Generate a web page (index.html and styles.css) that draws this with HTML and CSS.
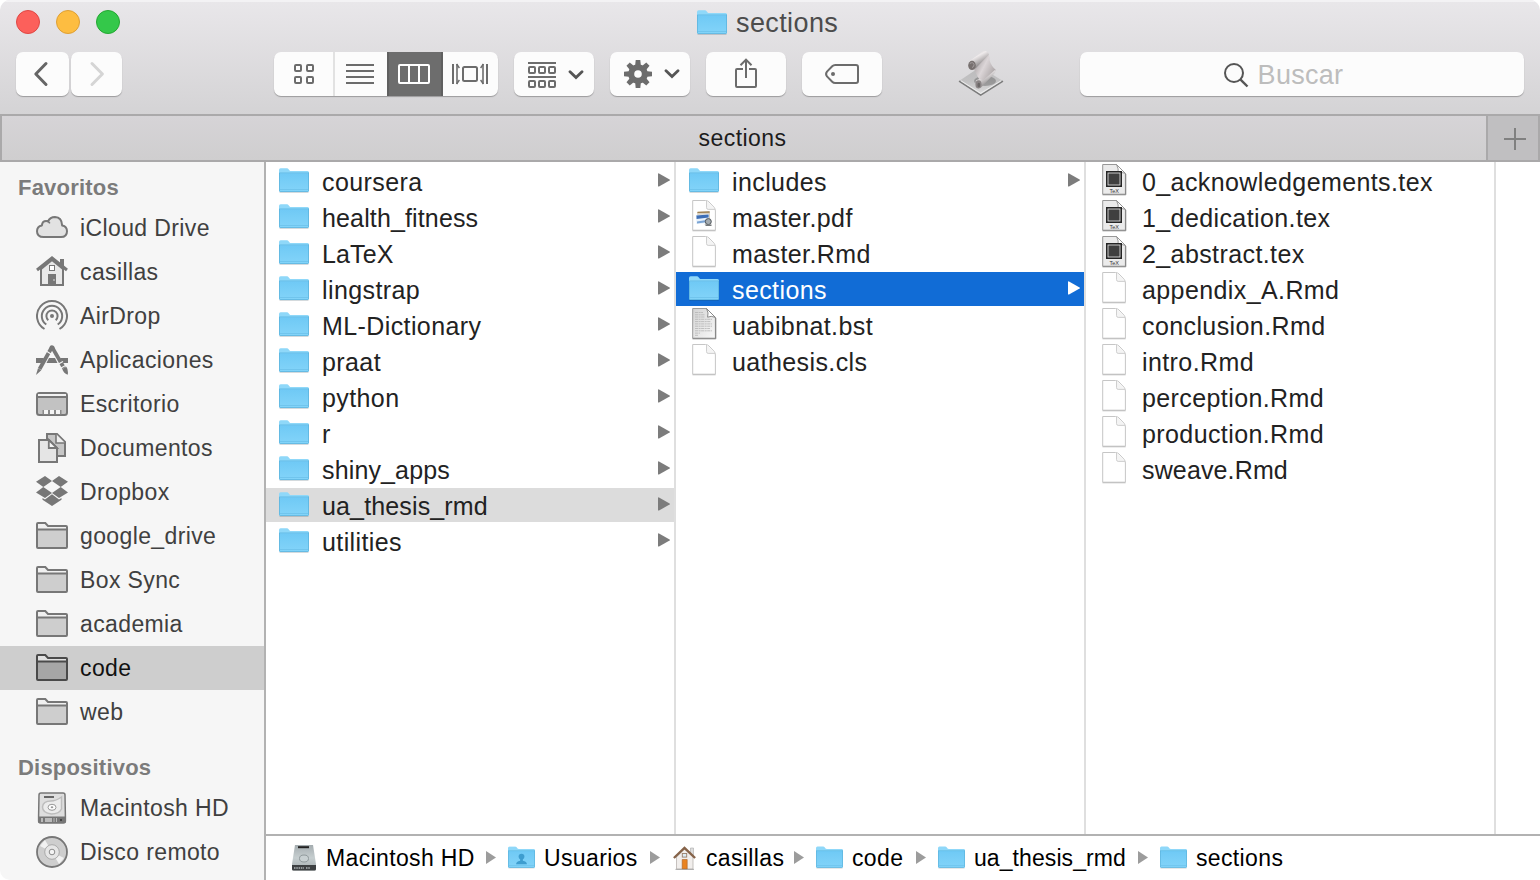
FILE: index.html
```html
<!DOCTYPE html>
<html lang="es">
<head>
<meta charset="utf-8">
<title>sections</title>
<link rel="stylesheet" href="styles.css">
</head>
<body>
<svg class="defs" width="0" height="0" aria-hidden="true">
  <defs>
    <linearGradient id="blue" x1="0" y1="0" x2="0" y2="1"><stop offset="0" stop-color="#6fc9f5"/><stop offset="1" stop-color="#83d4f9"/></linearGradient>
    <linearGradient id="metal" x1="0" y1="0" x2="0" y2="1"><stop offset="0" stop-color="#a4acaf"/><stop offset=".5" stop-color="#c6ced0"/><stop offset="1" stop-color="#a5adaf"/></linearGradient>
    <linearGradient id="paper" x1="0" y1="0" x2="1" y2="1"><stop offset="0" stop-color="#d4d4d4"/><stop offset="1" stop-color="#f8f8f8"/></linearGradient>
    <linearGradient id="scroll" x1="0" y1="0" x2="1" y2=".7"><stop offset="0" stop-color="#8f898a"/><stop offset=".5" stop-color="#dcd6d8"/><stop offset="1" stop-color="#a39d9e"/></linearGradient>
    <linearGradient id="roll" x1="0" y1="0" x2=".6" y2="1"><stop offset="0" stop-color="#b9b4b5"/><stop offset=".4" stop-color="#efebec"/><stop offset="1" stop-color="#6f6b6c"/></linearGradient>
    <linearGradient id="plate" x1="0" y1="0" x2="0" y2="1"><stop offset="0" stop-color="#999"/><stop offset=".5" stop-color="#aaa"/><stop offset="1" stop-color="#e6e6e6"/></linearGradient>
    <symbol id="folder" viewBox="0 0 30 25">
      <path d="M.5 24.4h29" stroke="#000" stroke-opacity=".15"/>
      <path d="M0 2Q0 .3 1.6.3H8Q9 .3 9.6 1.2L10.6 2.6Q11 3.1 12 3.1H28.5Q30 3.1 30 4.6V10H0z" fill="#8fd8f9"/>
      <path d="M0 5.2H30V22.6Q30 24 28.6 24H1.4Q0 24 0 22.6z" fill="url(#blue)"/>
      <path d="M.2 4.9H29.8" stroke="#5fb9e3" stroke-width=".8"/>
      <path d="M.4 5V22.4Q.4 23.6 1.6 23.6H28.4Q29.6 23.6 29.6 22.4V4.7" fill="none" stroke="#5ab1da" stroke-width=".8"/>
      <path d="M.8 21.5H29.2" stroke="#69bfe8" stroke-width=".7"/>
    </symbol>
    <symbol id="file" viewBox="0 0 26 33">
      <path d="M1.7 1.5H14.5Q16.5 1.5 18 3L23 8.2Q24.4 9.8 24.4 12V31.2H1.7z" fill="#fff" stroke="#c6c6c6" stroke-linejoin="round"/>
      <path d="M15.5 1.8V8.6Q15.5 10.4 17.2 10.4H24" fill="#f4f4f4" stroke="#c9c9c9" stroke-width=".9" stroke-linejoin="round"/>
      <path d="M1.5 31.8H24.6" stroke="#b4b4b4" stroke-width=".8"/>
    </symbol>
    <symbol id="pdf" viewBox="0 0 26 33">
      <use href="#file"/>
      <path d="M6 13L19 12.5V22L7 23z" fill="#d9d0bf"/><path d="M6.5 13.4L18.6 13" stroke="#9b7d4e" stroke-width="1.4"/>
      <path d="M5 16L18 15V24L5.5 25z" fill="#e7f1fb"/>
      <path d="M5.4 16.4L17.6 15.6V18.5L5.6 20z" fill="#3e6eb5"/><path d="M6 22.5L17 20.8V23L6 24.4z" fill="#7ba4d4"/>
      <circle cx="17.3" cy="22.6" r="3" fill="#a4abb0" stroke="#50565a"/><path d="M13.5 25.5H20.5V27H15z" fill="#74787a"/>
    </symbol>
    <symbol id="textfile" viewBox="0 0 26 33">
      <path d="M1.7 1.5H15.5L24.4 10.4V31.2H1.7z" fill="url(#paper)" stroke="#9b9b9b" stroke-linejoin="round"/>
      <path d="M15.5 1.5Q18 6 16.6 10.2Q20 8.4 24.4 10.4z" fill="#fff" stroke="#7f7f7f" stroke-width=".9"/>
      <path d="M4 5.5H12M4 7.8H14M4 10H14M4 12.3H21M4 14.6H20M4 16.9H21M4 19.2H21M4 21.5H19M4 23.8H21M4 26.1H9M4 28.3H7" stroke="#b4b4b4" stroke-width=".8" stroke-dasharray="3 .6 2 .5"/>
      <path d="M1.5 31.8H24.8V11" fill="none" stroke="#777" stroke-width=".9"/>
    </symbol>
    <symbol id="tex" viewBox="0 0 26 33">
      <path d="M1.7 1.5H15.5L24.4 10.4V31.2H1.7z" fill="#ebebeb" stroke="#979797" stroke-linejoin="round"/>
      <path d="M15.5 1.5Q18 6 17 10Q20 8.6 24.4 10.4z" fill="#fff" stroke="#8d8d8d" stroke-width=".9"/>
      <rect x="5" y="8" width="16" height="16" fill="#252525"/>
      <rect x="7" y="10" width="12" height="12" fill="#3f3f3f" stroke="#d8d8d8" stroke-width=".9"/>
      <text x="13.2" y="29.5" text-anchor="middle" font-family="Liberation Sans" font-size="5.5" letter-spacing="0" fill="#333">TeX</text>
      <path d="M1.5 31.8H24.8V11" fill="none" stroke="#777" stroke-width=".8"/>
    </symbol>
    <symbol id="arrow" viewBox="0 0 12 14"><path d="M0 .9Q0 0 1 .4L11.6 6.4Q12.3 7 11.6 7.6L1 13.5Q0 13.9 0 13z" fill="currentColor"/></symbol>
    <symbol id="crumb" viewBox="0 0 10 13"><path d="M0 0L10 6.5L0 13z" fill="#9c9c9c"/></symbol>
    <symbol id="chev" viewBox="0 0 16 10"><path d="M2 1.8L8 7.6L14 1.8" fill="none" stroke="#555" stroke-width="2.8" stroke-linecap="round" stroke-linejoin="miter"/></symbol>
    <symbol id="side-folder" viewBox="0 0 32 32">
      <path d="M1 4Q1 3 2 3H9.3L12 6H30Q31 6 31 7V27Q31 28 30 28H2Q1 28 1 27z" class="lid"/>
      <path d="M2 10H30V27H2z" class="pocket"/>
      <path d="M1 10.5Q1 9.5 2 9.5H30Q31 9.5 31 10.5M1 4Q1 3 2 3H9.3L12 6H30Q31 6 31 7V27Q31 28 30 28H2Q1 28 1 27z" class="edge"/>
    </symbol>
  </defs>
</svg>

<div class="window">
  <header class="chrome">
    <div class="titlebar">
      <div class="lights"><i class="light red"></i><i class="light yellow"></i><i class="light green"></i></div>
      <div class="title"><svg width="30" height="25"><use href="#folder"/></svg><span>sections</span></div>
    </div>
    <div class="toolbar">
      <div class="btn back"><svg width="53" height="44" viewBox="0 0 53 44"><path d="M30 11.5L19.8 22L30 32.5" fill="none" stroke="#666" stroke-width="3" stroke-linecap="round" stroke-linejoin="round"/></svg></div>
      <div class="btn forward"><svg width="51" height="44" viewBox="0 0 51 44"><path d="M21 11.5L31.4 22L21 32.5" fill="none" stroke="#d5d5d5" stroke-width="3" stroke-linecap="round" stroke-linejoin="round"/></svg></div>
      <div class="btn views">
        <svg class="seg" width="59" height="44" fill="none" stroke="#6c6c6c" stroke-width="2"><rect x="21" y="13" width="6" height="6" rx="1"/><rect x="33" y="13" width="6" height="6" rx="1"/><rect x="21" y="25" width="6" height="6" rx="1"/><rect x="33" y="25" width="6" height="6" rx="1"/></svg>
        <svg class="seg divided" width="52" height="44" stroke="#6c6c6c" stroke-width="2"><path d="M11 13H39M11 19H39M11 25H39M11 31H39"/></svg>
        <svg class="seg active" width="56" height="44" fill="none" stroke="#fff" stroke-width="2"><rect x="12" y="13" width="30" height="18" rx="1"/><path d="M22 13V31M32 13V31"/></svg>
        <svg class="seg" width="55" height="44" fill="none" stroke="#6c6c6c" stroke-width="2"><path d="M10 12V32M44 12V32"/><path d="M14 12V32M40 12V32" stroke-width="1.6"/><path d="M13.6 12L16.4 16M16.4 28L13.6 32M40.4 12L37.6 16M37.6 28L40.4 32" stroke-width="1.4"/><rect x="20" y="15" width="14" height="14" rx="1.5"/></svg>
      </div>
      <div class="btn tool menu arrange"><svg width="28" height="26" fill="none" stroke="#6c6c6c" stroke-width="2"><path d="M0 1H28M0 15H28"/><rect x="1" y="5" width="6" height="6" rx="1"/><rect x="11" y="5" width="6" height="6" rx="1"/><rect x="21" y="5" width="6" height="6" rx="1"/><rect x="1" y="19" width="6" height="6" rx="1"/><rect x="11" y="19" width="6" height="6" rx="1"/><rect x="21" y="19" width="6" height="6" rx="1"/></svg><svg width="16" height="10"><use href="#chev"/></svg></div>
      <div class="btn tool menu"><svg width="28" height="28" viewBox="-14 -14 28 28"><g fill="#6c6c6c"><path id="tooth" d="M-2.3 -14H2.3L3 -7H-3z"/><use href="#tooth" transform="rotate(45)"/><use href="#tooth" transform="rotate(90)"/><use href="#tooth" transform="rotate(135)"/><use href="#tooth" transform="rotate(180)"/><use href="#tooth" transform="rotate(225)"/><use href="#tooth" transform="rotate(270)"/><use href="#tooth" transform="rotate(315)"/><circle r="9.8"/></g><circle r="3.8" fill="#fcfcfc"/></svg><svg width="16" height="10"><use href="#chev"/></svg></div>
      <div class="btn tool"><svg width="80" height="44" viewBox="0 0 80 44" fill="none" stroke="#6c6c6c" stroke-width="2"><path d="M37 17H31Q30 17 30 18V34Q30 35 31 35H49Q50 35 50 34V18Q50 17 49 17H43M40 26V8M34.5 13.3L40 7.6L45.5 13.3"/></svg></div>
      <div class="btn tool"><svg width="80" height="44" viewBox="0 0 80 44"><path d="M33.2 13H54Q56 13 56 15V29Q56 31 54 31H33.2Q31.5 31 30.2 29.7L25 24.4Q23.1 22 25 19.6L30.2 14.3Q31.5 13 33.2 13z" fill="none" stroke="#6c6c6c" stroke-width="2"/><circle cx="31" cy="22" r="2" fill="#6c6c6c"/></svg></div>
      <svg class="script" width="46" height="48" viewBox="0 0 46 48">
        <path d="M1 31L22 17L45 31L22.5 45z" fill="url(#plate)" fill-opacity=".5"/>
        <path d="M1 31.2L22.7 45.2L45 31.2" fill="none" stroke="#7b7b7b" stroke-width="1.4"/><path d="M3 30.8L22.7 43.3L43 30.8" fill="none" stroke="#f1f1f1" stroke-width=".9"/>
        <ellipse cx="27" cy="31" rx="11" ry="5" fill="#333" opacity=".3"/>
        <path d="M16 19L30 4Q32 6 31.5 10Q33 16 38 20L25 34Q19.5 28 16 19z" fill="url(#scroll)"/>
        <path d="M11 11.5L25 .9Q29.5 .3 31 4.6L17.5 18.6Q15 15 11 11.5z" fill="url(#roll)"/>
        <ellipse cx="14" cy="15.4" rx="3.8" ry="4.6" fill="#77706f"/><path d="M11.8 13.5Q15 11.5 16 14.5Q16.3 17 14 17.5" fill="none" stroke="#a59fa0" stroke-width="1"/>
        <path d="M18 30.5Q22 27.5 25 30.5L37.5 19.5Q38 22 35 25L23 37.5Q19 40 17.3 36.5z" fill="url(#roll)"/><ellipse cx="20.5" cy="34.3" rx="3" ry="4" fill="#8b8586"/><ellipse cx="20.8" cy="35" rx="1.4" ry="2.2" fill="#6b6767"/>
      </svg>
      <div class="btn search"><svg width="26" height="26" viewBox="0 0 26 26" fill="none" stroke="#555" stroke-width="2"><circle cx="11" cy="11" r="9"/><path d="M17.3 17.3L24.5 24.5" stroke-width="2.4"/></svg><span>Buscar</span></div>
    </div>
    <div class="tabs">
      <div class="tab">sections</div>
      <div class="plus"><svg width="22" height="22" stroke="#808080" stroke-width="2"><path d="M0 11H22M11 0V22"/></svg></div>
    </div>
  </header>

  <div class="body">
    <nav class="sidebar">
      <h2>Favoritos</h2>
      <div class="place"><svg viewBox="0 0 32 32"><path d="M7.5 25Q1 25 1 19.2Q1 14.3 5.9 13.4Q6.3 9 10.2 9Q11.2 9 12 9.5Q14 5 19 5Q25.8 5.2 26.2 13.6Q31 14.6 31 19.2Q31 25 25 25z" fill="#e2e2e2" stroke="#777" stroke-width="2" stroke-linejoin="round"/><path d="M12 9.5Q13.2 10 13.8 11.4" stroke="#777" stroke-width="1.6" fill="none"/></svg><span>iCloud Drive</span></div>
      <div class="place"><svg viewBox="0 0 32 32"><path d="M5 13L16 4L27 13V29H5z" fill="#e8e8e8" stroke="#777" stroke-width="2"/><path d="M24 3H28V12L24 8z" fill="#777"/><path d="M1 14L16 2L31 14" fill="none" stroke="#777" stroke-width="3"/><rect x="13.5" y="9.5" width="5" height="5" fill="#fff" stroke="#777"/><path d="M12 18H20V29H12z" fill="#777"/><path d="M18 23V25" stroke="#ddd"/></svg><span>casillas</span></div>
      <div class="place"><svg viewBox="0 0 32 32" fill="none" stroke="#777" stroke-width="2"><path d="M8.5 29A15 15 0 1 1 23.5 29"/><path d="M10.3 24.5A10.2 10.2 0 1 1 21.7 24.5"/><path d="M12.3 20.2A5.6 5.6 0 1 1 19.7 20.2"/><circle cx="16" cy="16" r="2" fill="#777" stroke="none"/></svg><span>AirDrop</span></div>
      <div class="place"><svg viewBox="0 0 32 32"><path d="M0 14H8L5.5 19H0zM13 14H19L21.5 19H10.5zM24 14H32V19H27z" fill="#777"/><path d="M15.8 3.2L3.6 25" stroke="#777" stroke-width="3.8"/><path d="M15.8 2.6L28 24" stroke="#777" stroke-width="3.8"/><path d="M14 2Q16 .2 18 2.4L19 5H13.4z" fill="#777"/><path d="M2 24.2L5.3 26.2L0 31z" fill="#777"/><path d="M26.3 25L30.3 22.8Q32.6 26 31.7 30.8Q27.3 29 26.3 25z" fill="#777"/><path d="M11 7.6L15 9.9M22 20.2L27 17.4M24.5 24.2L30 21.2" stroke="#f6f6f6" stroke-width="1.2"/></svg><span>Aplicaciones</span></div>
      <div class="place"><svg viewBox="0 0 32 32"><rect x="1" y="5" width="30" height="22" rx="2.5" fill="#c2c2c2" stroke="#777" stroke-width="2"/><path d="M2 6H30V8H2z" fill="#f2f2f2"/><path d="M1 9H31" stroke="#777" stroke-width="2"/><path d="M6.5 22H25.5V26.5H6.5z" fill="#8a8a8a"/><path d="M8 22H12V26H8zM14 22H18V26H14zM20 22H24V26H20z" fill="#f4f4f4"/></svg><span>Escritorio</span></div>
      <div class="place"><svg viewBox="0 0 32 32" stroke="#777" stroke-width="2"><path d="M11 2H21L29 10V24H11z" fill="#c6c6c6"/><path d="M20 2V11H29" fill="#eee" stroke-width="1.6"/><path d="M3 8H13L21 16V30H3z" fill="#e5e5e5"/><path d="M12.8 8V16H21z" fill="#f6f6f6" stroke-width="1.8"/></svg><span>Documentos</span></div>
      <div class="place"><svg viewBox="0 0 32 32" fill="#777"><path d="M9 0L16 5L7.3 11L0 5.8zM23 0L16 5L24.7 11L32 5.8zM0 16.5L7.3 11L16 17L9 22zM32 16.5L24.7 11L16 17L23 22zM6.5 22L9 23.5L16 18.3L23 23.5L25.5 22V23.8L16 30L6.5 23.8z"/></svg><span>Dropbox</span></div>
      <div class="place"><svg><use href="#side-folder"/></svg><span>google_drive</span></div>
      <div class="place"><svg><use href="#side-folder"/></svg><span>Box Sync</span></div>
      <div class="place"><svg><use href="#side-folder"/></svg><span>academia</span></div>
      <div class="place current"><svg><use href="#side-folder"/></svg><span>code</span></div>
      <div class="place"><svg><use href="#side-folder"/></svg><span>web</span></div>
      <h2 class="second">Dispositivos</h2>
      <div class="place"><svg viewBox="0 0 32 32"><path d="M5 1H27Q29 1 29 3L29.4 24V29Q29.4 31 27.4 31H4.6Q2.6 31 2.6 29V24L3 3Q3 1 5 1z" fill="#dedede" stroke="#777" stroke-width="1.5"/><path d="M2.6 24.5H29.4V31H2.6z" fill="#777"/><path d="M8 5H18" stroke="#666" stroke-width="2"/><path d="M25.5 5V17Q23 22 15.5 22Q6.5 21 6.5 15Q7 9 15 9Q20 9 25.5 5z" fill="#ececec" stroke="#bdbdbd" stroke-width="1.5"/><ellipse cx="16" cy="15.3" rx="4" ry="3" fill="#fff" stroke="#999"/><ellipse cx="16" cy="15.3" rx="1.3" ry="1" fill="#999"/><path d="M5 26H7V30H5zM9 26H16V30H9zM17.5 26H18.5V30H17.5zM20 26H21V30H20z" fill="#bbb"/><circle cx="25" cy="28" r="1" fill="#333"/></svg><span>Macintosh HD</span></div>
      <div class="place"><svg viewBox="0 0 32 32"><circle cx="16" cy="16" r="15" fill="#cecece" stroke="#777" stroke-width="1.8"/><path d="M16 16L4 10L9 4zM16 16L28 22L23 28z" fill="#f2f2f2"/><circle cx="16" cy="16" r="7.3" fill="#e6e6e6" stroke="#aaa"/><circle cx="16" cy="16" r="2.8" fill="#f4f4f4" stroke="#8c8c8c"/></svg><span>Disco remoto</span></div>
    </nav>

    <main class="browser">
      <div class="columns">
        <div class="column">
          <div class="row"><svg class="f"><use href="#folder"/></svg><span>coursera</span><svg class="a"><use href="#arrow"/></svg></div>
          <div class="row snug"><svg class="f"><use href="#folder"/></svg><span>health_fitness</span><svg class="a"><use href="#arrow"/></svg></div>
          <div class="row snug"><svg class="f"><use href="#folder"/></svg><span>LaTeX</span><svg class="a"><use href="#arrow"/></svg></div>
          <div class="row"><svg class="f"><use href="#folder"/></svg><span>lingstrap</span><svg class="a"><use href="#arrow"/></svg></div>
          <div class="row"><svg class="f"><use href="#folder"/></svg><span>ML-Dictionary</span><svg class="a"><use href="#arrow"/></svg></div>
          <div class="row"><svg class="f"><use href="#folder"/></svg><span>praat</span><svg class="a"><use href="#arrow"/></svg></div>
          <div class="row"><svg class="f"><use href="#folder"/></svg><span>python</span><svg class="a"><use href="#arrow"/></svg></div>
          <div class="row"><svg class="f"><use href="#folder"/></svg><span>r</span><svg class="a"><use href="#arrow"/></svg></div>
          <div class="row snug"><svg class="f"><use href="#folder"/></svg><span>shiny_apps</span><svg class="a"><use href="#arrow"/></svg></div>
          <div class="row snug open"><svg class="f"><use href="#folder"/></svg><span>ua_thesis_rmd</span><svg class="a"><use href="#arrow"/></svg></div>
          <div class="row"><svg class="f"><use href="#folder"/></svg><span>utilities</span><svg class="a"><use href="#arrow"/></svg></div>
        </div>
        <div class="column">
          <div class="row"><svg class="f"><use href="#folder"/></svg><span>includes</span><svg class="a"><use href="#arrow"/></svg></div>
          <div class="row"><svg class="d"><use href="#pdf"/></svg><span>master.pdf</span></div>
          <div class="row"><svg class="d"><use href="#file"/></svg><span>master.Rmd</span></div>
          <div class="row selected"><svg class="f"><use href="#folder"/></svg><span>sections</span><svg class="a"><use href="#arrow"/></svg></div>
          <div class="row"><svg class="d"><use href="#textfile"/></svg><span>uabibnat.bst</span></div>
          <div class="row"><svg class="d"><use href="#file"/></svg><span>uathesis.cls</span></div>
        </div>
        <div class="column">
          <div class="row"><svg class="d"><use href="#tex"/></svg><span>0_acknowledgements.tex</span></div>
          <div class="row"><svg class="d"><use href="#tex"/></svg><span>1_dedication.tex</span></div>
          <div class="row"><svg class="d"><use href="#tex"/></svg><span>2_abstract.tex</span></div>
          <div class="row"><svg class="d"><use href="#file"/></svg><span>appendix_A.Rmd</span></div>
          <div class="row"><svg class="d"><use href="#file"/></svg><span>conclusion.Rmd</span></div>
          <div class="row"><svg class="d"><use href="#file"/></svg><span>intro.Rmd</span></div>
          <div class="row"><svg class="d"><use href="#file"/></svg><span>perception.Rmd</span></div>
          <div class="row"><svg class="d"><use href="#file"/></svg><span>production.Rmd</span></div>
          <div class="row snug"><svg class="d"><use href="#file"/></svg><span>sweave.Rmd</span></div>
        </div>
      </div>
      <footer class="pathbar">
        <div class="crumb"><svg width="26" height="28" viewBox="0 0 26 28"><path d="M4 1H22L25 20V25Q25 26.5 23.5 26.5H2.5Q1 26.5 1 25V20z" fill="url(#metal)"/><path d="M1 21H25V25Q25 26.5 23.5 26.5H2.5Q1 26.5 1 25z" fill="#3d4042"/><path d="M3 24H13M15 24H19" stroke="#929799" stroke-width="2.2" stroke-dasharray="1.5 .8"/><path d="M7 3.2H18" stroke="#222" stroke-width="2"/><ellipse cx="13" cy="14.5" rx="4.5" ry="3.5" fill="#c8d0d2" stroke="#919a9d"/></svg><span>Macintosh HD</span><svg class="sep"><use href="#crumb"/></svg></div>
        <div class="crumb"><svg width="27" height="23" viewBox="0 0 30 25"><use href="#folder" width="30" height="25"/><circle cx="15" cy="11.5" r="3.2" fill="#3e9dcf"/><path d="M9 20Q9 16.5 13.5 16V13H16.5V16Q21 16.5 21 20z" fill="#3e9dcf"/></svg><span>Usuarios</span><svg class="sep"><use href="#crumb"/></svg></div>
        <div class="crumb"><svg width="25" height="26" viewBox="0 0 24 26"><path d="M18 3H21V11H18z" fill="#ddd" stroke="#aaa" stroke-width=".6"/><path d="M4 12L12 4L20.5 12V24H4z" fill="#f1eeec" stroke="#b9b4b0" stroke-width=".8"/><path d="M1.4 13L12 3L22.6 13" fill="none" stroke="#866349" stroke-width="2.4"/><rect x="9.8" y="8.5" width="4.4" height="3.6" fill="#dcecf5" stroke="#997e6b" stroke-width=".9"/><path d="M9.7 14.5H14.7V24H9.7z" fill="#e9821f" stroke="#a85f23" stroke-width=".6"/><path d="M3 24.4H21.5" stroke="#999" stroke-width=".8"/></svg><span>casillas</span><svg class="sep"><use href="#crumb"/></svg></div>
        <div class="crumb"><svg width="27" height="23"><use href="#folder"/></svg><span>code</span><svg class="sep"><use href="#crumb"/></svg></div>
        <div class="crumb"><svg width="27" height="23"><use href="#folder"/></svg><span class="tight">ua_thesis_rmd</span><svg class="sep"><use href="#crumb"/></svg></div>
        <div class="crumb"><svg width="27" height="23"><use href="#folder"/></svg><span>sections</span></div>
      </footer>
    </main>
  </div>
</div>
</body>
</html>
```

FILE: styles.css
```css
* { box-sizing: border-box; }
body { margin: 0; background: #fff; font-family: "Liberation Sans", Arial, sans-serif; }
svg { display: block; flex: none; }
.defs { position: absolute; }
.window { width: 1540px; height: 880px; display: flex; flex-direction: column; overflow: hidden; border-radius: 10px 10px 0 10px; background: #fff; }

.chrome { height: 162px; flex: none; background: linear-gradient(#e9e7ea, #d4d3d5 114px); box-shadow: inset 0 2px 0 #f3f2f4; }
.titlebar { height: 46px; padding: 10px 16px 0; display: grid; grid-template-columns: 681px 1fr; align-items: start; }
.lights { display: flex; gap: 16px; }
.light { width: 24px; height: 24px; border-radius: 50%; border: 1px solid; }
.red { background: #fc605b; border-color: #df4744; }
.yellow { background: #fdbd41; border-color: #de9f34; }
.green { background: #34c84a; border-color: #24a732; }
.title { display: flex; gap: 9px; font-size: 27px; line-height: 26px; letter-spacing: .4px; color: #4c4c4c; }

.toolbar { height: 68px; padding: 6px 16px 0; display: flex; align-items: flex-start; }
.btn { height: 44px; border-radius: 7px; background: #fcfcfc; box-shadow: 0 1px 1px rgba(0, 0, 0, .28); display: flex; align-items: center; flex: none; }
.back { margin-right: 2px; }
.forward { margin-right: 152px; }
.views { overflow: hidden; margin-right: 16px; }
.divided { box-shadow: -2px 0 0 #e2e2e2; margin-left: 2px; }
.active { background: #6d6d6d; box-shadow: inset 2px 0 0 #606060, inset -2px 0 0 #606060; }
.tool { width: 80px; margin-right: 16px; justify-content: center; gap: 12px; }
.menu { padding-left: 4px; }
.arrange { padding-top: 2px; }
.script { margin: -2px 76px 0 60px; }
.search { flex: 1; justify-content: center; gap: 9px; font-size: 27px; letter-spacing: .3px; color: #bdbdbd; padding-right: 38px; }
.search svg { margin-top: 2px; }
.search span { padding-top: 2px; }

.tabs { height: 48px; display: flex; border: 2px solid #aaa9aa; background: linear-gradient(#d6d4d7, #cfcecf); }
.tab { flex: 1; padding-right: 3px; text-align: center; font-size: 23px; line-height: 45px; letter-spacing: .45px; color: #1c1c1c; }
.plus { width: 52px; border-left: 2px solid #aaa9aa; background: #c0bfc1; display: flex; align-items: center; padding: 2px 0 0 16px; }

.body { flex: 1; min-height: 0; display: flex; }
.sidebar { width: 266px; flex: none; background: #f6f6f6; border-right: 2px solid #b2b2b2; }
.sidebar h2 { margin: 0; height: 44px; padding: 4px 0 0 18px; font-size: 22px; line-height: 44px; letter-spacing: .2px; color: #7b7b7b; }
.sidebar .second { height: 52px; padding-top: 12px; }
.place { --line: #777; --fill: #cecece; height: 44px; padding-left: 36px; display: flex; align-items: center; gap: 12px; font-size: 23px; letter-spacing: .38px; color: #404040; }
.place svg { width: 32px; height: 32px; }
.place span { padding-top: 1px; }
.current { --line: #4a4a4a; --fill: #a6a6a6; background: #cecece; color: #111; }
.lid { fill: #ededed; fill-opacity: .6; }
.pocket { fill: var(--fill); }
.edge { fill: none; stroke: var(--line); stroke-width: 2; }

.browser { flex: 1; min-width: 0; display: flex; flex-direction: column; }
.columns { flex: 1; display: flex; }
.column { width: 410px; border-right: 2px solid #dfdfdf; padding-top: 2px; display: flex; flex-direction: column; gap: 2px; }
.row { height: 34px; padding: 0 4px 0 13px; display: flex; align-items: center; font-size: 25px; letter-spacing: .4px; color: #222; }
.row span { flex: 1; padding-top: 3px; margin-left: 13px; white-space: nowrap; }
.snug { letter-spacing: .14px; }
.f { width: 30px; height: 25px; margin-bottom: 2px; }
.d { width: 26px; height: 33px; margin: 0 2px 3px; }
.a { width: 12px; height: 14px; color: #7c7c7c; margin-bottom: 2px; }
.open { background: #dcdcdc; }
.selected { background: #116cd6; color: #fff; }
.selected .a { color: #fff; }

.pathbar { height: 46px; border-top: 2px solid #b2b2b2; padding-left: 25px; display: grid; grid-template-columns: 217px 164px 144px 122px 222px 1fr; }
.crumb { display: flex; align-items: center; font-size: 23px; letter-spacing: .36px; color: #000; }
.crumb span { margin-left: 9px; }
.crumb .tight { letter-spacing: .08px; }
.crumb > svg:first-child { margin-bottom: 1px; }
.sep { width: 10px; height: 13px; margin-left: auto; margin-right: 12px; margin-bottom: 1px; }
```
